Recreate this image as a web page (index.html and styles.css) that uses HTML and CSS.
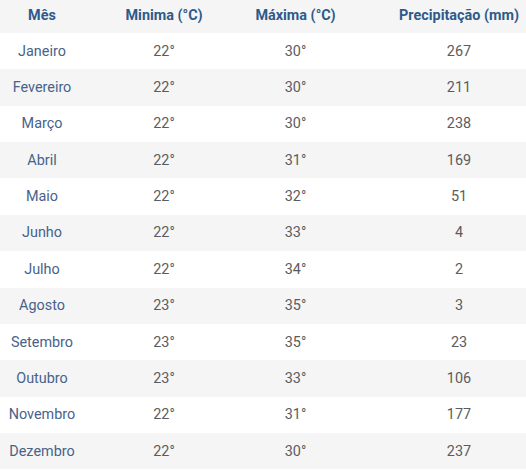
FILE: index.html
```html
<!DOCTYPE html>
<html lang="pt">
<head>
<meta charset="utf-8">
<title>Clima</title>
<link rel="stylesheet" href="styles.css">
</head>
<body>
<div class="table">
  <div class="cell head">Mês</div>
  <div class="cell head">Minima (°C)</div>
  <div class="cell head">Máxima (°C)</div>
  <div class="cell head last">Precipitação (mm)</div>

  <div class="cell month">Janeiro</div><div class="cell num">22°</div><div class="cell num">30°</div><div class="cell num last">267</div>
  <div class="cell month alt">Fevereiro</div><div class="cell num alt">22°</div><div class="cell num alt">30°</div><div class="cell num alt last">211</div>
  <div class="cell month">Março</div><div class="cell num">22°</div><div class="cell num">30°</div><div class="cell num last">238</div>
  <div class="cell month alt">Abril</div><div class="cell num alt">22°</div><div class="cell num alt">31°</div><div class="cell num alt last">169</div>
  <div class="cell month">Maio</div><div class="cell num">22°</div><div class="cell num">32°</div><div class="cell num last">51</div>
  <div class="cell month alt">Junho</div><div class="cell num alt">22°</div><div class="cell num alt">33°</div><div class="cell num alt last">4</div>
  <div class="cell month">Julho</div><div class="cell num">22°</div><div class="cell num">34°</div><div class="cell num last">2</div>
  <div class="cell month alt">Agosto</div><div class="cell num alt">23°</div><div class="cell num alt">35°</div><div class="cell num alt last">3</div>
  <div class="cell month">Setembro</div><div class="cell num">23°</div><div class="cell num">35°</div><div class="cell num last">23</div>
  <div class="cell month alt">Outubro</div><div class="cell num alt">23°</div><div class="cell num alt">33°</div><div class="cell num alt last">106</div>
  <div class="cell month">Novembro</div><div class="cell num">22°</div><div class="cell num">31°</div><div class="cell num last">177</div>
  <div class="cell month alt">Dezembro</div><div class="cell num alt">22°</div><div class="cell num alt">30°</div><div class="cell num alt last">237</div>
</div>
</body>
</html>
```

FILE: styles.css
```css
html, body {
  margin: 0;
  padding: 0;
  background: #ffffff;
}

body {
  font-family: Roboto, "Liberation Sans", Arial, sans-serif;
  font-size: 14.4px;
}

.table {
  display: grid;
  grid-template-columns: 84px 160px 103px 179px;
  grid-template-rows: 33px repeat(12, 36.36px);
  width: 526px;
}

.cell {
  display: flex;
  align-items: center;
  justify-content: center;
  white-space: nowrap;
}

.last {
  padding-left: 45px;
}

.head {
  background: #f5f5f5;
  color: #2e5a8a;
  font-weight: 700;
  padding-bottom: 2px;
}

.month {
  color: #47638a;
}

.num {
  color: #5c5c5c;
}

.alt {
  background: #f5f5f5;
}
```
